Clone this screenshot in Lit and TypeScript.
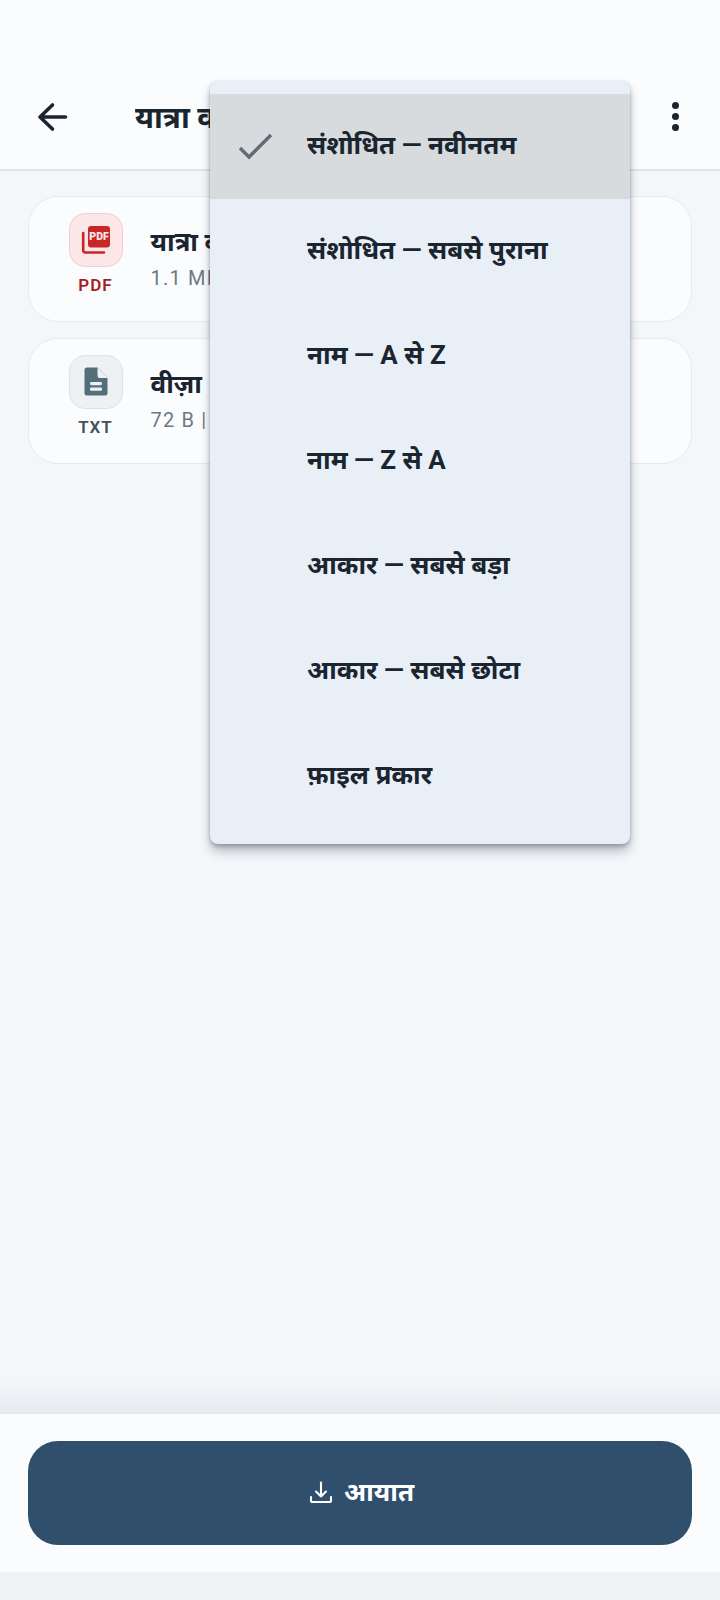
import { LitElement, html, css } from "lit";
import { customElement } from "lit/decorators.js";

const items = [
  "संशोधित — नवीनतम",
  "संशोधित — सबसे पुराना",
  "नाम — A से Z",
  "नाम — Z से A",
  "आकार — सबसे बड़ा",
  "आकार — सबसे छोटा",
  "फ़ाइल प्रकार",
];

@customElement("app-root")
export class AppRoot extends LitElement {
  static styles = css`
    :host {
      display: block;
      position: relative;
      width: 720px;
      height: 1600px;
      overflow: hidden;
      background: #f3f7fa;
      font-family: Roboto, "Noto Sans", sans-serif;
      color: #1b2530;
    }
    .page { display: flex; flex-direction: column; height: 100%; }
    .header {
      height: 171px;
      box-sizing: border-box;
      padding: 64px 24px 0 28px;
      background: #fafcfe;
      border-bottom: 2px solid #dfe3e7;
      display: flex;
      align-items: center;
    }
    .back { width: 48px; height: 48px; flex: none; display: block; }
    .title {
      margin-left: 59px;
      font-size: 30px;
      font-weight: 700;
      flex: 1;
      white-space: nowrap;
      overflow: hidden;
    }
    .kebab { flex: none; display: flex; flex-direction: column; gap: 3.5px; margin-right: 17px; }
    .kebab i { display: block; width: 7.5px; height: 7.5px; border-radius: 50%; background: #1b2530; }
    .list {
      flex: 1;
      display: flex;
      flex-direction: column;
      gap: 16px;
      padding: 25px 28px 0;
    }
    .card {
      height: 126px;
      box-sizing: border-box;
      border: 1.5px solid #e6eaee;
      border-radius: 30px;
      background: #fafcfe;
      display: flex;
      align-items: flex-start;
      padding: 15.5px 0 0 39.5px;
    }
    .type { width: 54px; display: flex; flex-direction: column; align-items: center; gap: 8px; flex: none; }
    .tile {
      width: 54px; height: 54px; box-sizing: border-box;
      border-radius: 16px; border: 1.5px solid #dfe3e6; background: #eef1f4;
      display: flex; align-items: center; justify-content: center;
    }
    .tile.pdf { background: #fde6e6; border-color: #f8cccc; }
    .ext { font-size: 17px; font-weight: 600; letter-spacing: 1px; color: #43525f; }
    .ext.pdf { color: #a61f1f; }
    .info { margin-left: 28px; }
    .name { font-size: 26px; font-weight: 700; line-height: 36px; margin-top: 11px; white-space: nowrap; }
    .meta { font-size: 20px; color: #6e7885; line-height: 28px; margin-top: 4px; letter-spacing: 1.2px; white-space: nowrap; }
    .footer {
      height: 159px;
      box-sizing: border-box;
      padding: 27px 28px 28px;
      background: #fafcfe;
      border-top: 1px solid #e3e7ea;
      position: relative;
    }
    .footer::before {
      content: "";
      position: absolute;
      left: 0; right: 0; top: -34px; height: 33px;
      background: linear-gradient(to bottom, rgba(0,20,40,0), rgba(0,20,40,0.05));
    }
    .import {
      height: 104px;
      border-radius: 30px;
      background: #2f4f6d;
      color: #fff;
      display: flex;
      align-items: center;
      justify-content: center;
      gap: 11px;
      padding-left: 3px;
      font-size: 26px;
      font-weight: 700;
    }
    .import svg { width: 24px; height: 24px; display: block; margin-bottom: 2px; }
    .import span { padding-bottom: 5px; }
    .nav { height: 28px; background: #eef2f5; }
    .menu {
      position: absolute;
      left: 210px;
      top: 81px;
      width: 420px;
      box-sizing: border-box;
      padding: 13px 0 15px;
      background: #e9eff6;
      border-radius: 8px;
      box-shadow: 0 8px 11px -1px rgba(30,40,55,0.3), 0 2px 4px rgba(30,40,55,0.28), 0 0 2px rgba(30,40,55,0.06);
    }
    .item {
      height: 105px;
      box-sizing: border-box;
      display: flex;
      align-items: center;
      padding-left: 97px;
      padding-bottom: 6px;
      font-size: 26px;
      font-weight: 700;
      position: relative;
      white-space: nowrap;
    }
    .item.sel { background: #d7dbde; }
    .check { position: absolute; left: 27px; top: 37px; width: 36px; height: 30px; }
  `;

  render() {
    return html`
      <div class="page">
        <div class="header">
          <svg class="back" viewBox="0 0 48 48" fill="none" stroke="#1b2530" stroke-width="3.6" stroke-linecap="round" stroke-linejoin="round">
            <path d="M13 24H37.5M24.5 12 12 24 24.5 36" />
          </svg>
          <div class="title">यात्रा कागज़ात</div>
          <div class="kebab"><i></i><i></i><i></i></div>
        </div>
        <div class="list">
          <div class="card">
            <div class="type">
              <div class="tile pdf">
                <svg width="30" height="30" viewBox="0 0 30 30">
                  <rect x="7" y="1" width="22" height="21.5" rx="3" fill="#c62828" />
                  <path d="M2.2 8v17.5a2 2 0 0 0 2 2H23" fill="none" stroke="#c62828" stroke-width="2.6" stroke-linecap="round" />
                  <text x="18" y="15" text-anchor="middle" font-family="Roboto, sans-serif" font-size="10.5" font-weight="900" fill="#fde6e6">PDF</text>
                </svg>
              </div>
              <div class="ext pdf">PDF</div>
            </div>
            <div class="info">
              <div class="name">यात्रा बीमा</div>
              <div class="meta">1.1 MB | PDF</div>
            </div>
          </div>
          <div class="card">
            <div class="type">
              <div class="tile">
                <svg width="24" height="29" viewBox="0 0 24 29">
                  <path d="M3 .5h10.5L23.5 11v15a2.5 2.5 0 0 1-2.5 2.5H3A2.5 2.5 0 0 1 .5 26V3A2.5 2.5 0 0 1 3 .5Z" fill="#546e7a" />
                  <path d="M13.5 .5 23.5 11H16a2.5 2.5 0 0 1-2.5-2.5Z" fill="#eef1f4" />
                  <rect x="6" y="15" width="12" height="3.2" rx="1.4" fill="#eef1f4" />
                  <rect x="6" y="20.6" width="12" height="3.2" rx="1.4" fill="#eef1f4" />
                </svg>
              </div>
              <div class="ext">TXT</div>
            </div>
            <div class="info">
              <div class="name">वीज़ा</div>
              <div class="meta">72 B | TXT</div>
            </div>
          </div>
        </div>
        <div class="footer">
          <div class="import">
            <svg viewBox="0 0 24 24" fill="none" stroke="#fff" stroke-width="2.1" stroke-linecap="round" stroke-linejoin="round">
              <path d="M12 2.5v14M7 11.5l5 5 5-5M2 17v3.4A1.6 1.6 0 0 0 3.6 22h16.8a1.6 1.6 0 0 0 1.6-1.6V17" />
            </svg>
            <span>आयात</span>
          </div>
        </div>
        <div class="nav"></div>
      </div>
      <div class="menu">
        ${items.map(
          (t, i) => html`<div class="item ${i === 0 ? "sel" : ""}">
            ${i === 0
              ? html`<svg class="check" viewBox="0 0 36 30" fill="none" stroke="#636b75" stroke-width="3.4"><path d="M3 17 12 26 34 4" /></svg>`
              : ""}
            <span>${t}</span>
          </div>`
        )}
      </div>
    `;
  }
}
